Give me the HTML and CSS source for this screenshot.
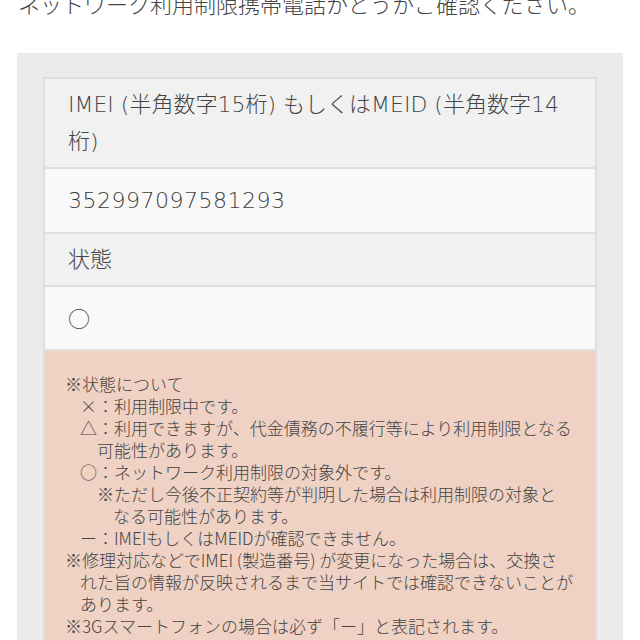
FILE: index.html
```html
<!DOCTYPE html>
<html lang="ja">
  <head>
    <meta charset="UTF-8" />
    <meta name="viewport" content="width=device-width, initial-scale=1.0" />
    <title>ネットワーク利用制限携帯電話確認</title>
    <link rel="stylesheet" href="styles.css">
  </head>
  <body>
    <p class="lead">ネットワーク利用制限携帯電話かどうかご確認ください。</p>

    <div class="result-box">
      <table class="result-table">
        <tr>
          <th>IMEI (半角数字15桁) もしくはMEID (半角数字14桁)</th>
        </tr>
        <tr>
          <td class="imei">352997097581293</td>
        </tr>
        <tr>
          <th>状態</th>
        </tr>
        <tr>
          <td class="status">○</td>
        </tr>
        <tr>
          <td class="notes">
            <div>※状態について</div>
            <div class="mark">×：利用制限中です。</div>
            <div class="mark">△：利用できますが、代金債務の不履行等により利用制限となる可能性があります。</div>
            <div class="mark">○：ネットワーク利用制限の対象外です。</div>
            <div class="sub">※ただし今後不正契約等が判明した場合は利用制限の対象となる可能性があります。</div>
            <div class="mark">ー：IMEIもしくはMEIDが確認できません。</div>
            <div class="hang">※修理対応などでIMEI (製造番号) が変更になった場合は、交換された旨の情報が反映されるまで当サイトでは確認できないことがあります。</div>
            <div>※3Gスマートフォンの場合は必ず「ー」と表記されます。</div>
          </td>
        </tr>
      </table>
    </div>
  </body>
</html>
```

FILE: styles.css
```css
body {
    font-family: "Noto Sans CJK JP", "Noto Sans", sans-serif;
    font-weight: 300;
    margin: 0;
    padding: 0 17px;
    color: #3c3c3c;
    background-color: #fff;
}

/* Intro line (scrolled partly out of view) */
.lead {
    font-size: 22px;
    line-height: 35px;
    margin: -14px 0 32px 1px;
    color: #444;
}

/* Grey frame around the result */
.result-box {
    background-color: #ebebeb;
    padding: 24px 26px 40px;
}

.result-table {
    width: 100%;
    border-collapse: collapse;
    border: 2px solid #dedede;
    font-family: "DejaVu Sans", "Noto Sans CJK JP", sans-serif;
    font-weight: 300;
}

.result-table th,
.result-table td {
    text-align: left;
    font-weight: 300;
    font-size: 22px;
    line-height: 37px;
    padding: 7px 23px 7px 23px;
    border-bottom: 2px solid #dedede;
}

.result-table th {
    background-color: #f1f1f1;
    color: #444;
}

.result-table td {
    background-color: #f9f9f9;
    padding-top: 13px;
    padding-bottom: 13px;
}

.result-table td.imei {
    letter-spacing: 0.5px;
}

.result-table td.status {
    font-family: "Noto Sans CJK JP", sans-serif;
    padding-top: 12px;
}

/* Pink notes block */
.result-table td.notes {
    background-color: #efd2c3;
    font-family: "Noto Sans CJK JP", sans-serif;
    font-size: 17px;
    line-height: 22px;
    padding: 22px 20px 30px 20px;
    color: #444;
}

.notes .mark {
    padding-left: 32px;
    text-indent: -17px;
}

.notes .sub {
    padding-left: 48px;
    padding-right: 12px;
    text-indent: -16px;
}

.notes .hang {
    padding-left: 15px;
    padding-right: 2px;
    text-indent: -15px;
}
```
